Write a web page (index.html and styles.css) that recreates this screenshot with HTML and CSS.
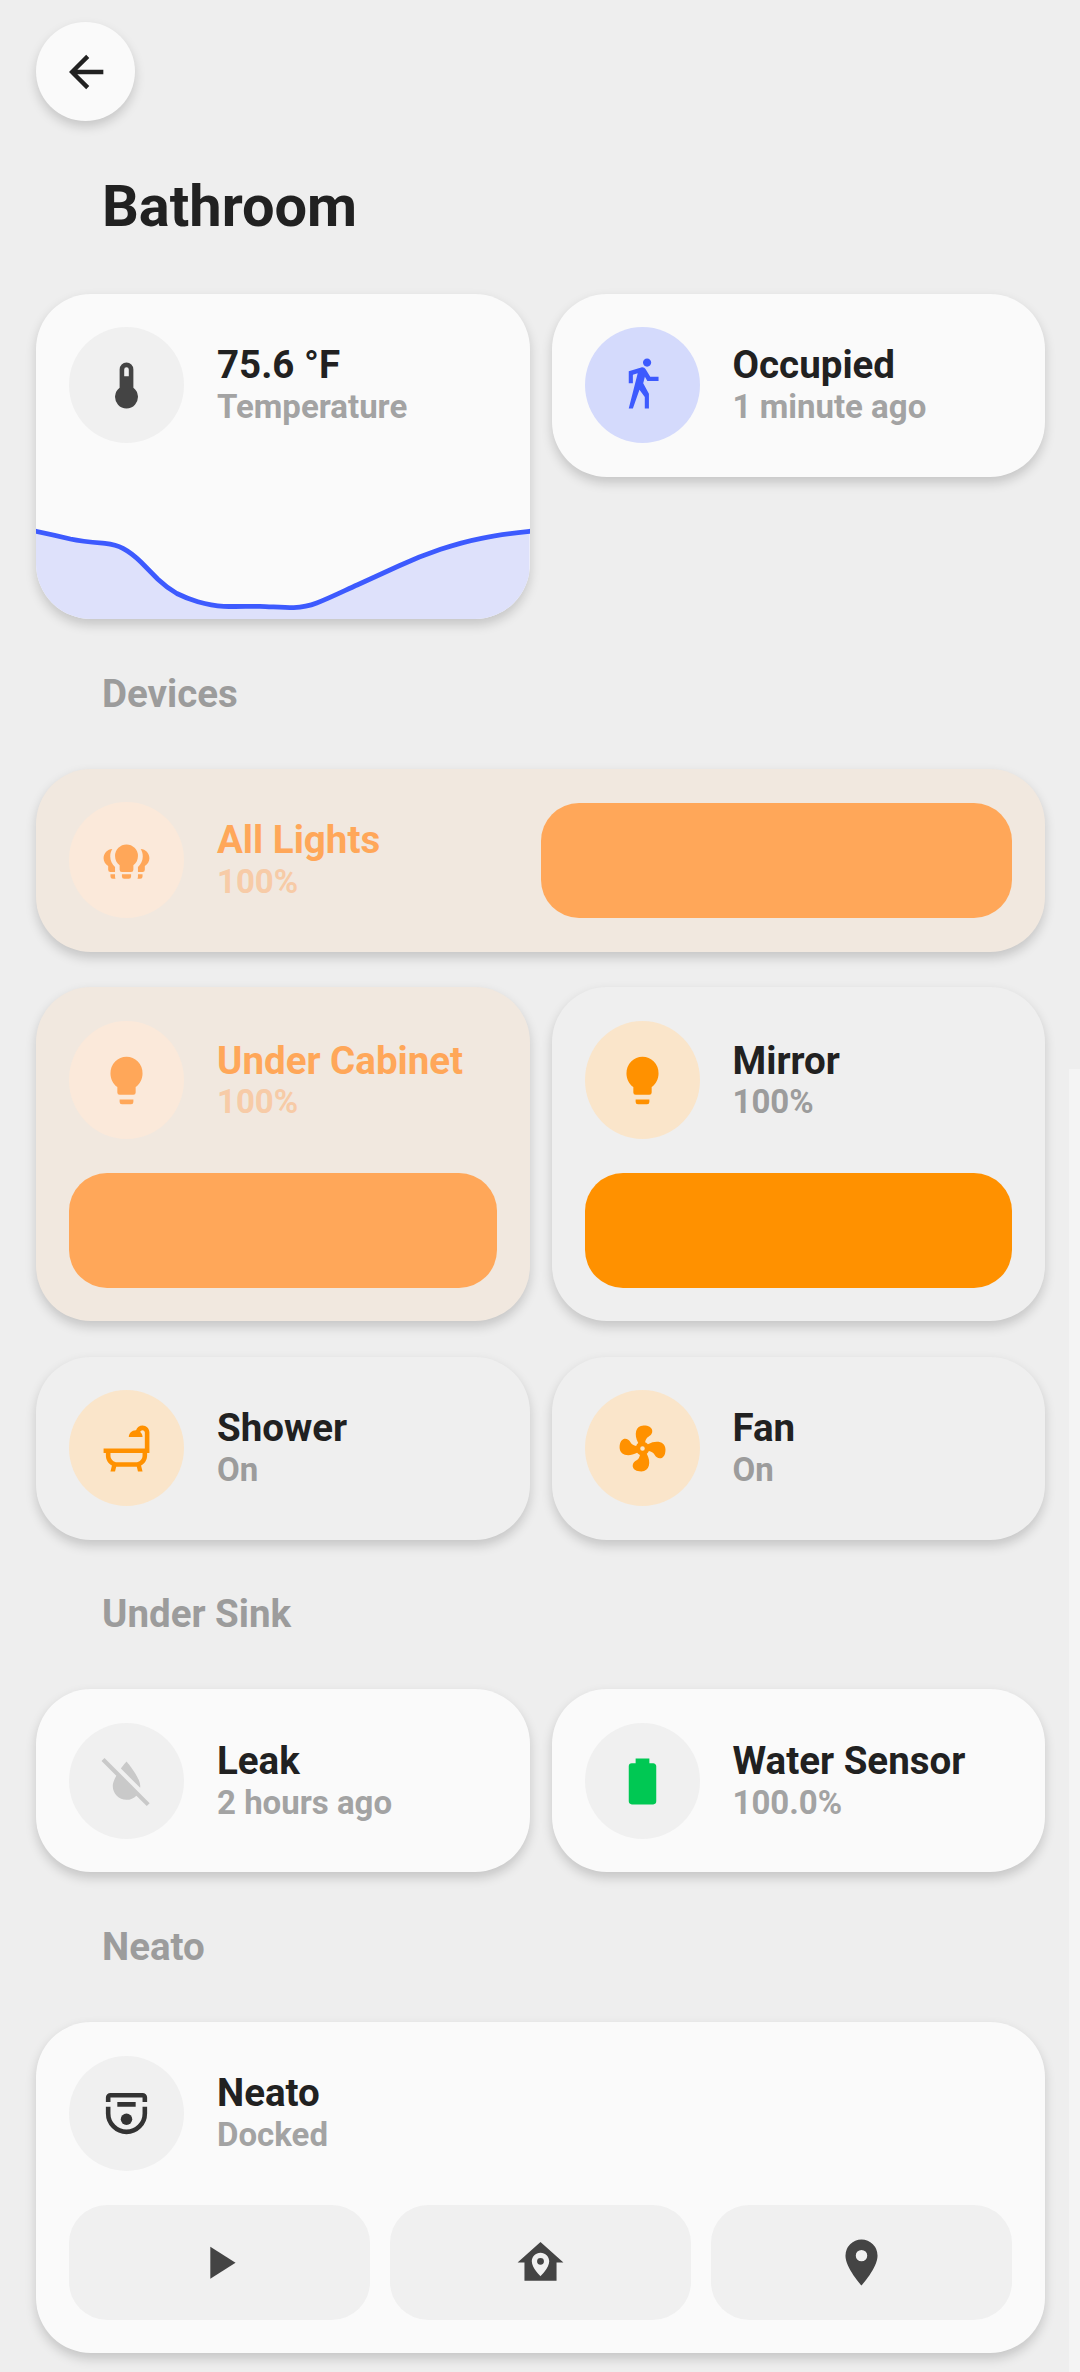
FILE: index.html
```html
<!DOCTYPE html>
<html lang="en">
<head>
<meta charset="utf-8">
<title>Bathroom</title>
<link rel="stylesheet" href="styles.css">
</head>
<body>
<main class="view">
  <button class="back" aria-label="Back"><svg viewBox="0 0 24 24"><path d="M20,11V13H8L13.5,18.5L12.08,19.92L4.16,12L12.08,4.08L13.5,5.5L8,11H20Z"/></svg></button>
  <h1 class="title">Bathroom</h1>

  <div class="row">
    <article class="card card-graph">
      <div class="item">
        <span class="badge"><svg viewBox="0 0 24 24"><path d="M15 13V5A3 3 0 0 0 9 5V13A5 5 0 1 0 15 13M12 4A1 1 0 0 1 13 5V8H11V5A1 1 0 0 1 12 4Z"/></svg></span>
        <div class="info"><span class="name">75.6 °F</span><span class="state">Temperature</span></div>
      </div>
      <svg class="graph" viewBox="0 230 494 95" preserveAspectRatio="none">
        <path class="graph-fill" d="M0 237.3Q18 241 34.4 245C46 247.5 57 248.3 69 249.3C76 250 82 251.5 87 254.3C93 257.5 99 262 105 268L122 285.3C128 291 134 295.5 141 299.5C148 303 155 305.7 162 307.7C170 310 178 311.8 188 312.3C200 312.8 212 312.2 224 312.3C235 312.6 246 313.7 258 313.7C266 313.3 274 311.7 281 309C295 303.5 308 297 322 290.7L363 272C377 265.5 391 260 405 255.3C418 251 432 247 446 244.3C462 241 478 239 494 237.3V325H0Z"/>
        <path class="graph-line" d="M-2 236.9L0 237.3Q18 241 34.4 245C46 247.5 57 248.3 69 249.3C76 250 82 251.5 87 254.3C93 257.5 99 262 105 268L122 285.3C128 291 134 295.5 141 299.5C148 303 155 305.7 162 307.7C170 310 178 311.8 188 312.3C200 312.8 212 312.2 224 312.3C235 312.6 246 313.7 258 313.7C266 313.3 274 311.7 281 309C295 303.5 308 297 322 290.7L363 272C377 265.5 391 260 405 255.3C418 251 432 247 446 244.3C462 241 478 239 494 237.3L496 237.1"/>
      </svg>
    </article>
    <article class="card">
      <div class="item">
        <span class="badge badge-blue"><svg viewBox="0 0 24 24"><path d="M14.12,10H19V8.2H15.38L13.38,4.87C13.08,4.37 12.54,4.03 11.92,4.03C11.74,4.03 11.58,4.06 11.42,4.11L6,5.8V11H7.8V7.33L9.91,6.67L6,22H7.8L10.67,13.89L13,17V22H14.8V15.59L12.31,11.05L13.04,8.18M14,3.8C15,3.8 15.8,3 15.8,2C15.8,1 15,0.2 14,0.2C13,0.2 12.2,1 12.2,2C12.2,3 13,3.8 14,3.8Z"/></svg></span>
        <div class="info"><span class="name">Occupied</span><span class="state">1 minute ago</span></div>
      </div>
    </article>
  </div>

  <h2 class="subtitle">Devices</h2>
  <section class="stack">
    <article class="card card-peach card-wide">
      <div class="item">
        <span class="badge"><svg viewBox="0 0 24 24"><path d="M12 5A5 5 0 0 0 7 10C7 11.7 7.8 13.2 9 14.1V16A1 1 0 0 0 10 17H14A1 1 0 0 0 15 16V14.1C16.2 13.2 17 11.7 17 10A5 5 0 0 0 12 5ZM10 18V19A1 1 0 0 0 11 20H13A1 1 0 0 0 14 19V18ZM5.8 7C5.2 8 4.9 9 4.9 10.2C4.9 12 5.7 13.6 7 14.8V17H5A1 1 0 0 1 4 16V14.4C2.8 13.6 2 12.4 2 11C2 8.9 3.7 7.1 5.8 7ZM5 18V19A1 1 0 0 0 6 20H7.2A2.9 2.9 0 0 1 7 19V18ZM18.2 7C18.8 8 19.1 9 19.1 10.2C19.1 12 18.3 13.6 17 14.8V17H19A1 1 0 0 0 20 16V14.4C21.2 13.6 22 12.4 22 11C22 8.9 20.3 7.1 18.2 7ZM19 18V19A1 1 0 0 1 18 20H16.8A2.9 2.9 0 0 0 17 19V18Z"/></svg></span>
        <div class="info"><span class="name">All Lights</span><span class="state">100%</span></div>
      </div>
      <div class="slider"></div>
    </article>

    <div class="row row-lights">
      <article class="card card-peach">
        <div class="item">
          <span class="badge"><svg viewBox="0 0 24 24" preserveAspectRatio="none"><path d="M12,2A7,7 0 0,0 5,9C5,11.38 6.19,13.47 8,14.74V17A1,1 0 0,0 9,18H15A1,1 0 0,0 16,17V14.74C17.81,13.47 19,11.38 19,9A7,7 0 0,0 12,2M9,21A1,1 0 0,0 10,22H14A1,1 0 0,0 15,21V20H9V21Z"/></svg></span>
          <div class="info"><span class="name">Under Cabinet</span><span class="state">100%</span></div>
        </div>
        <div class="slider"></div>
      </article>
      <article class="card card-clear">
        <div class="item">
          <span class="badge badge-orange"><svg viewBox="0 0 24 24" preserveAspectRatio="none"><path d="M12,2A7,7 0 0,0 5,9C5,11.38 6.19,13.47 8,14.74V17A1,1 0 0,0 9,18H15A1,1 0 0,0 16,17V14.74C17.81,13.47 19,11.38 19,9A7,7 0 0,0 12,2M9,21A1,1 0 0,0 10,22H14A1,1 0 0,0 15,21V20H9V21Z"/></svg></span>
          <div class="info"><span class="name">Mirror</span><span class="state">100%</span></div>
        </div>
        <div class="slider"></div>
      </article>
    </div>

    <div class="row">
      <article class="card card-clear">
        <div class="item">
          <span class="badge badge-orange"><svg viewBox="0 0 24 24"><path d="M21 14V15C21 16.91 19.93 18.57 18.35 19.41L19 22H17L16.5 20C16.33 20 16.17 20 16 20H8C7.83 20 7.67 20 7.5 20L7 22H5L5.65 19.41C4.07 18.57 3 16.91 3 15V14H2V12H20V5C20 4.45 19.55 4 19 4C18.5 4 18.12 4.34 18 4.79C18.63 5.33 19 6.13 19 7H13C13 5.34 14.34 4 16 4H16.17C16.58 2.83 17.69 2 19 2C20.66 2 22 3.34 22 5V14H21M19 14H5V15C5 16.66 6.34 18 8 18H16C17.66 18 19 16.66 19 15V14Z"/></svg></span>
          <div class="info"><span class="name">Shower</span><span class="state">On</span></div>
        </div>
      </article>
      <article class="card card-clear">
        <div class="item">
          <span class="badge badge-orange"><svg viewBox="0 0 24 24"><path d="M12,11A1,1 0 0,0 11,12A1,1 0 0,0 12,13A1,1 0 0,0 13,12A1,1 0 0,0 12,11M12.5,2C17,2 17.11,5.57 14.75,6.75C13.76,7.24 13.32,8.29 13.13,9.22C13.61,9.42 14.03,9.73 14.35,10.13C18.05,8.13 22.03,8.92 22.03,12.5C22.03,17 18.46,17.1 17.28,14.73C16.78,13.74 15.72,13.3 14.79,13.11C14.59,13.59 14.28,14 13.88,14.34C15.87,18.03 15.08,22 11.5,22C7,22 6.91,18.42 9.27,17.24C10.25,16.75 10.69,15.71 10.89,14.79C10.4,14.59 9.97,14.27 9.65,13.87C5.96,15.85 2,15.07 2,11.5C2,7 5.56,6.89 6.74,9.26C7.24,10.25 8.29,10.68 9.22,10.87C9.41,10.39 9.73,9.97 10.14,9.65C8.15,5.96 8.94,2 12.5,2Z"/></svg></span>
          <div class="info"><span class="name">Fan</span><span class="state">On</span></div>
        </div>
      </article>
    </div>
  </section>

  <h2 class="subtitle subtitle-sink">Under Sink</h2>
  <div class="row row-sink">
    <article class="card">
      <div class="item">
        <span class="badge badge-off"><svg viewBox="0 0 24 24"><path d="M20.84 22.73L16.29 18.18C15.2 19.3 13.69 20 12 20C8.69 20 6 17.31 6 14C6 12.67 6.67 11.03 7.55 9.44L1.11 3L2.39 1.73L22.11 21.46L20.84 22.73M18 14C18 10 12 3.25 12 3.25S10.84 4.55 9.55 6.35L17.95 14.75C18 14.5 18 14.25 18 14Z"/></svg></span>
        <div class="info"><span class="name">Leak</span><span class="state">2 hours ago</span></div>
      </div>
    </article>
    <article class="card">
      <div class="item">
        <span class="badge badge-green"><svg viewBox="0 0 24 24"><path d="M16.67,4H15V2H9V4H7.33A1.33,1.33 0 0,0 6,5.33V20.67C6,21.4 6.6,22 7.33,22H16.67A1.33,1.33 0 0,0 18,20.67V5.33C18,4.6 17.4,4 16.67,4Z"/></svg></span>
        <div class="info"><span class="name">Water Sensor</span><span class="state">100.0%</span></div>
      </div>
    </article>
  </div>

  <h2 class="subtitle">Neato</h2>
  <article class="card card-vacuum">
    <div class="item">
      <span class="badge badge-dark"><svg viewBox="0 0 24 24"><path d="M4 7V5A1 1 0 0 1 5 4H19A1 1 0 0 1 20 5V7M4 9V12A8 8 0 0 0 20 12V9M8 8H16" fill="none" stroke="currentColor" stroke-width="2"/><circle cx="12" cy="14.5" r="2.5"/></svg></span>
      <div class="info"><span class="name">Neato</span><span class="state">Docked</span></div>
    </div>
    <div class="controls">
      <button class="control" aria-label="Start"><svg viewBox="0 0 24 24"><path d="M8,5.14V19.14L19,12.14L8,5.14Z"/></svg></button>
      <button class="control" aria-label="Return home"><svg viewBox="0 0 24 24"><path d="M12,3L2,12H5V20H19V12H22L12,3M12,7.7C14.1,7.7 15.8,9.4 15.8,11.5C15.8,14.5 12,18 12,18C12,18 8.2,14.5 8.2,11.5C8.2,9.4 9.9,7.7 12,7.7M12,10A1.5,1.5 0 0,0 10.5,11.5A1.5,1.5 0 0,0 12,13A1.5,1.5 0 0,0 13.5,11.5A1.5,1.5 0 0,0 12,10Z"/></svg></button>
      <button class="control" aria-label="Locate"><svg viewBox="0 0 24 24"><path d="M12,11.5A2.5,2.5 0 0,1 9.5,9A2.5,2.5 0 0,1 12,6.5A2.5,2.5 0 0,1 14.5,9A2.5,2.5 0 0,1 12,11.5M12,2A7,7 0 0,0 5,9C5,14.25 12,22 12,22C12,22 19,14.25 19,9A7,7 0 0,0 12,2Z"/></svg></button>
    </div>
  </article>
</main>
<div class="scroll-thumb"></div>
</body>
</html>
```
FILE: styles.css
```css
* { box-sizing: border-box; }

body {
  margin: 0;
  background: #eee;
  color: #212121;
  font-family: Roboto, "Liberation Sans", sans-serif;
  font-weight: 700;
}

button { border: 0; padding: 0; font: inherit; color: inherit; }

svg { display: block; fill: currentColor; }

.view {
  height: 2372px;
  padding: 22px 35px 0 36px;
  overflow: hidden;
}

.back,
.card {
  background: #fafafa;
  box-shadow: 0 5.5px 11px rgba(0, 0, 0, .17);
}

.back {
  display: grid;
  place-items: center;
  width: 99px;
  height: 99px;
  border-radius: 50%;
}

.back svg { width: 52px; height: 52px; }

.title {
  margin: 0 0 2px;
  padding-left: 66px;
  font-size: 57.75px;
  line-height: 171px;
}

.subtitle {
  margin: 0;
  padding-left: 66px;
  font-size: 38.5px;
  line-height: 150px;
  color: #9c9c9c;
}

.subtitle-sink { margin-bottom: 2px; line-height: 147px; }

.row {
  display: grid;
  grid-template-columns: 1fr 1fr;
  gap: 22px;
  align-items: start;
}

.stack { display: grid; }

.row-lights { margin: 35px 0 36px; }

.card {
  min-width: 0;
  padding: 33px 33px 34px;
  border-radius: 55px;
}

.item { display: flex; align-items: center; gap: 33px; }

.badge {
  display: grid;
  place-items: center;
  flex: none;
  width: 115px;
  height: 116px;
  border-radius: 50%;
  background: #f0f0f0;
  color: #444;
}

.badge svg,
.control svg { width: 55px; height: 55px; }

.badge-blue { background: #d4dafc; color: #3d5afe; }
.badge-orange { background: #fae5ca; color: #ff9100; }
.badge-green { color: #00c853; }
.badge-off { color: #c9c9c9; }
.badge-dark { color: #333; }

.info {
  display: flex;
  flex-direction: column;
  white-space: nowrap;
}

.name { font-size: 38.5px; line-height: 44px; }
.state { font-size: 33px; line-height: 40px; color: #a3a3a3; }

.card-graph {
  display: flex;
  flex-direction: column;
  justify-content: space-between;
  height: 325px;
  padding-bottom: 0;
  overflow: hidden;
}

.graph { width: calc(100% + 66px); height: 95px; margin: 0 -33px; }
.graph-fill { fill: #dee1fb; }
.graph-line { fill: none; stroke: #3d5afe; stroke-width: 4.8; }

.card-clear { background: #efefef; }
.card-clear .state { color: #9c9c9c; }

.card-peach { background: #f1e8df; color: #ffa759; }
.card-peach .badge { background: #fbe9da; color: #ffa759; }
.card-peach .state { color: #f7cba7; }

.card-wide {
  display: grid;
  grid-template-columns: 1fr 1fr;
  align-items: center;
}

.slider { height: 115px; border-radius: 38px; background: #ff9100; }
.card-peach .slider { background: #ffa759; }

.row-lights .card { padding: 34px 33px 33px; }
.row-lights .badge { height: 118px; }
.row-lights .badge svg { height: 57px; }
.row-lights .name { line-height: 43px; }
.row-lights .slider { margin-top: 34px; }

.row-sink .card { padding: 34px 33px 33px; }

.card-vacuum { padding: 34px 33px 33px; }
.card-vacuum .badge { height: 115px; }
.card-vacuum .info { padding-bottom: 2px; }

.controls {
  display: grid;
  grid-template-columns: repeat(3, 1fr);
  gap: 20px;
  margin-top: 34px;
}

.control {
  display: grid;
  place-items: center;
  height: 115px;
  border-radius: 38px;
  background: #f0f0f0;
  color: #444;
}

.scroll-thumb {
  position: absolute;
  top: 1069px;
  right: 0;
  width: 11px;
  height: 1303px;
  background: #f4f4f4;
}
```
